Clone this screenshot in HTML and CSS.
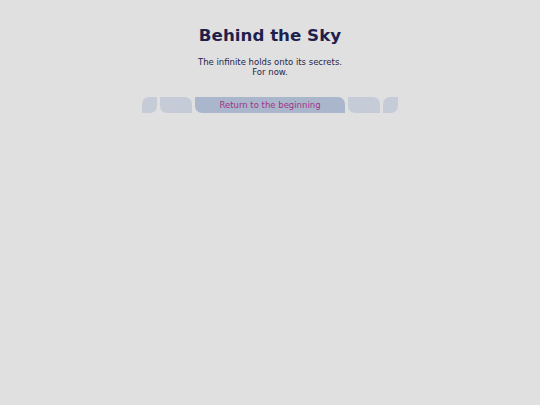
FILE: index.html
```html
<!DOCTYPE html>
<html>
<head>
<meta charset="utf-8">
<link rel="stylesheet" href="styles.css">
</head>
<body>
<main class="page">
  <h1 class="title">Behind the Sky</h1>
  <p class="lead">The infinite holds onto its secrets.<br>For now.</p>
  <nav class="bar">
    <span class="tile tile-sm leaf-a"></span>
    <span class="tile tile-md leaf-b"></span>
    <a class="tile main leaf-b" href="#">Return to the beginning</a>
    <span class="tile tile-md leaf-b"></span>
    <span class="tile tile-sm leaf-a"></span>
  </nav>
</main>
</body>
</html>
```
FILE: styles.css
```css
html, body {
  margin: 0;
  padding: 0;
  background: #e0e0e0;
}
body {
  font-family: "DejaVu Sans", Verdana, sans-serif;
}
.page {
  display: flex;
  flex-direction: column;
  align-items: center;
  padding-top: 25px;
}
.title {
  margin: 0;
  font-size: 16.7px;
  font-weight: bold;
  color: #1f1f4d;
  line-height: 20px;
}
.lead {
  margin: 12px 0 0;
  font-size: 8.5px;
  line-height: 10px;
  color: #26264a;
  text-align: center;
}
.bar {
  display: flex;
  gap: 3px;
  margin-top: 20px;
}
.tile {
  height: 16px;
  background: #c5ccd8;
}
.tile-sm { width: 15px; }
.tile-md { width: 32px; }
.leaf-a { border-radius: 7px 0 7px 0; }
.leaf-b { border-radius: 0 7px 0 7px; }
.main {
  width: 150px;
  background: #a9b6cb;
  color: #a33389;
  font-size: 8.5px;
  line-height: 16px;
  text-align: center;
  text-decoration: none;
}
```
